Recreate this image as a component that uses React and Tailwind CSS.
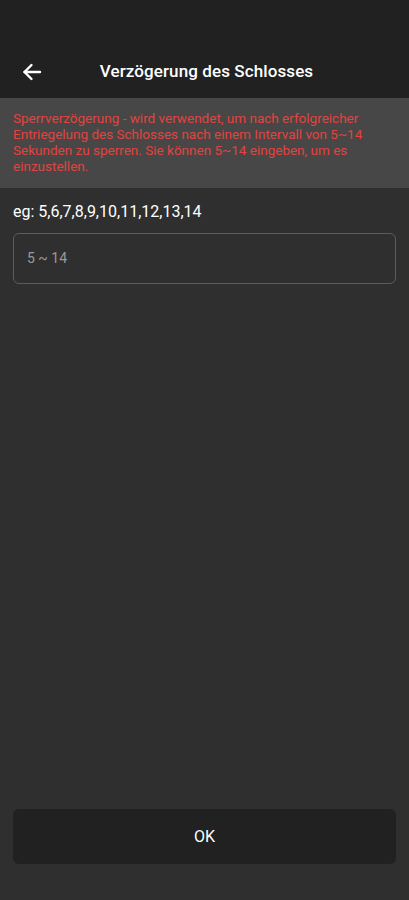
export default function App() {
  return (
    <div className="w-[409px] h-[900px] bg-[#2f2f2f] flex flex-col" style={{ fontFamily: "Roboto, 'Noto Sans', sans-serif" }}>
      <div className="h-[98px] bg-[#212121] flex items-end shrink-0">
        <div className="h-[52px] w-full flex items-center relative">
          <svg className="absolute left-[22px] top-[17px]" width="20" height="18" viewBox="0 0 20 18" fill="none" stroke="white" strokeWidth="2.4" strokeLinecap="round" strokeLinejoin="round">
            <path d="M18 9H2.5" />
            <path d="M9.5 2L2.5 9l7 7" />
          </svg>
          <div className="w-full text-center text-white text-[17px] font-medium pl-[4px] leading-none tracking-[0.1px] -mt-[2px]">
            Verzögerung des Schlosses
          </div>
        </div>
      </div>
      <div className="bg-[#474747] px-[13px] pt-[12px] pb-[14px] shrink-0">
        <p className="text-[#e2433f] text-[13.5px] leading-[16px]">
          Sperrverzögerung - wird verwendet, um nach erfolgreicher Entriegelung des Schlosses nach einem Intervall von 5~14 Sekunden zu sperren. Sie können 5~14 eingeben, um es einzustellen.
        </p>
      </div>
      <div className="px-[13px] pt-[14px] flex flex-col">
        <div className="text-white text-[16px] leading-[20px]">eg: 5,6,7,8,9,10,11,12,13,14</div>
        <div className="mt-[11px] h-[51px] rounded-[6px] border border-[#5c5c5c] flex items-center px-[13px]">
          <span className="text-[#9a9a9a] text-[14px]">5 ~ 14</span>
        </div>
      </div>
      <div className="flex-1" />
      <div className="px-[13px] pb-[36px]">
        <div className="h-[55px] rounded-[6px] bg-[#212121] flex items-center justify-center text-white text-[16px]">OK</div>
      </div>
    </div>
  );
}
